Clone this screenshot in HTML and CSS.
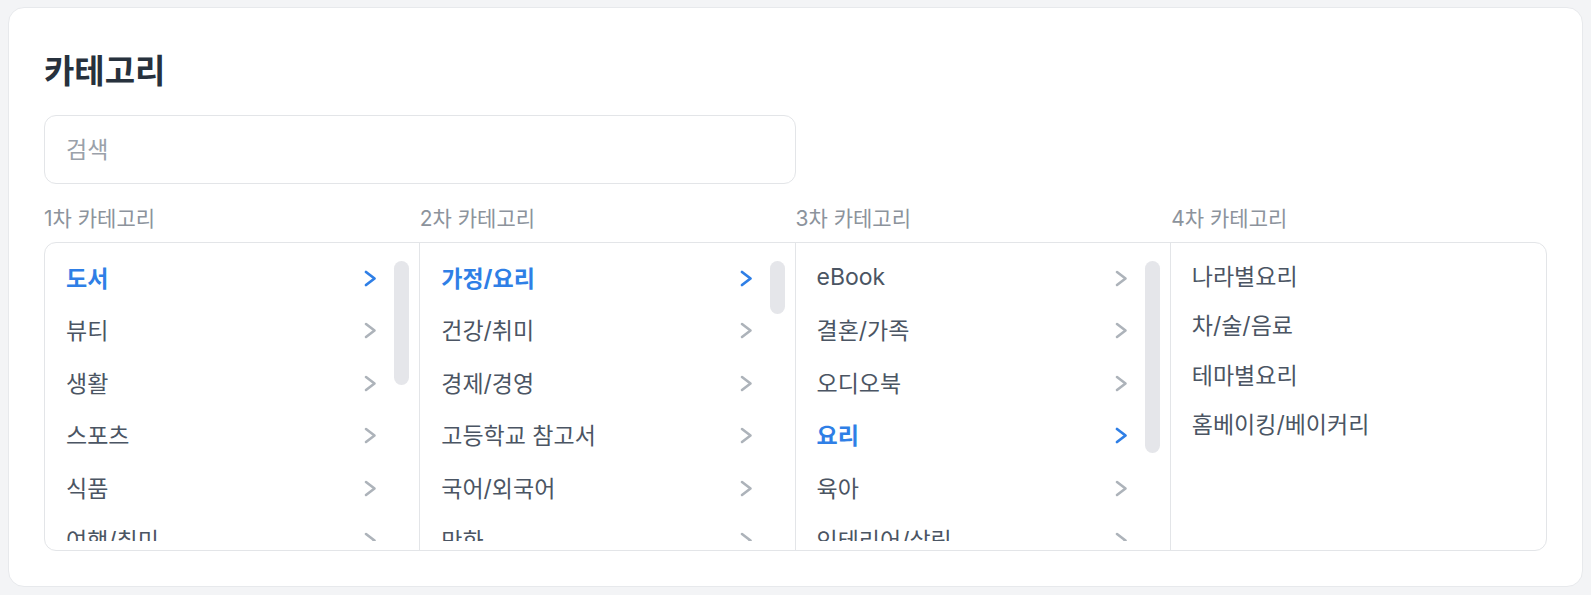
FILE: index.html
```html
<!DOCTYPE html>
<html lang="ko">
<head>
<meta charset="utf-8">
<title>카테고리</title>
<link rel="stylesheet" href="styles.css">
</head>
<body>
<section class="card">
  <h1 class="title">카테고리</h1>
  <input class="search" type="text" placeholder="검색">
  <div class="labels">
    <div class="label">1차 카테고리</div>
    <div class="label">2차 카테고리</div>
    <div class="label">3차 카테고리</div>
    <div class="label">4차 카테고리</div>
  </div>
  <div class="columns">
    <div class="col">
      <ul class="list">
        <li class="item active"><span>도서</span><svg class="chev" viewBox="0 0 13 17"><polyline points="2,2 10.5,8.5 2,15"/></svg></li>
        <li class="item"><span>뷰티</span><svg class="chev" viewBox="0 0 13 17"><polyline points="2,2 10.5,8.5 2,15"/></svg></li>
        <li class="item"><span>생활</span><svg class="chev" viewBox="0 0 13 17"><polyline points="2,2 10.5,8.5 2,15"/></svg></li>
        <li class="item"><span>스포츠</span><svg class="chev" viewBox="0 0 13 17"><polyline points="2,2 10.5,8.5 2,15"/></svg></li>
        <li class="item"><span>식품</span><svg class="chev" viewBox="0 0 13 17"><polyline points="2,2 10.5,8.5 2,15"/></svg></li>
        <li class="item"><span>여행/취미</span><svg class="chev" viewBox="0 0 13 17"><polyline points="2,2 10.5,8.5 2,15"/></svg></li>
        <li class="item"><span>의류</span><svg class="chev" viewBox="0 0 13 17"><polyline points="2,2 10.5,8.5 2,15"/></svg></li>
      </ul>
      <div class="thumb t1"></div>
    </div>
    <div class="col">
      <ul class="list">
        <li class="item active"><span>가정/요리</span><svg class="chev" viewBox="0 0 13 17"><polyline points="2,2 10.5,8.5 2,15"/></svg></li>
        <li class="item"><span>건강/취미</span><svg class="chev" viewBox="0 0 13 17"><polyline points="2,2 10.5,8.5 2,15"/></svg></li>
        <li class="item"><span>경제/경영</span><svg class="chev" viewBox="0 0 13 17"><polyline points="2,2 10.5,8.5 2,15"/></svg></li>
        <li class="item"><span>고등학교 참고서</span><svg class="chev" viewBox="0 0 13 17"><polyline points="2,2 10.5,8.5 2,15"/></svg></li>
        <li class="item"><span>국어/외국어</span><svg class="chev" viewBox="0 0 13 17"><polyline points="2,2 10.5,8.5 2,15"/></svg></li>
        <li class="item"><span>만화</span><svg class="chev" viewBox="0 0 13 17"><polyline points="2,2 10.5,8.5 2,15"/></svg></li>
        <li class="item"><span>소설/시/희곡</span><svg class="chev" viewBox="0 0 13 17"><polyline points="2,2 10.5,8.5 2,15"/></svg></li>
      </ul>
      <div class="thumb t2"></div>
    </div>
    <div class="col">
      <ul class="list">
        <li class="item"><span>eBook</span><svg class="chev" viewBox="0 0 13 17"><polyline points="2,2 10.5,8.5 2,15"/></svg></li>
        <li class="item"><span>결혼/가족</span><svg class="chev" viewBox="0 0 13 17"><polyline points="2,2 10.5,8.5 2,15"/></svg></li>
        <li class="item"><span>오디오북</span><svg class="chev" viewBox="0 0 13 17"><polyline points="2,2 10.5,8.5 2,15"/></svg></li>
        <li class="item active"><span>요리</span><svg class="chev" viewBox="0 0 13 17"><polyline points="2,2 10.5,8.5 2,15"/></svg></li>
        <li class="item"><span>육아</span><svg class="chev" viewBox="0 0 13 17"><polyline points="2,2 10.5,8.5 2,15"/></svg></li>
        <li class="item"><span>인테리어/살림</span><svg class="chev" viewBox="0 0 13 17"><polyline points="2,2 10.5,8.5 2,15"/></svg></li>
      </ul>
      <div class="thumb t3"></div>
    </div>
    <div class="col">
      <ul class="list leaf">
        <li class="item"><span>나라별요리</span></li>
        <li class="item"><span>차/술/음료</span></li>
        <li class="item"><span>테마별요리</span></li>
        <li class="item"><span>홈베이킹/베이커리</span></li>
      </ul>
    </div>
  </div>
</section>
</body>
</html>
```

FILE: styles.css
```css
* { box-sizing: border-box; }

html, body {
  margin: 0;
  background: #f3f4f6;
}

body {
  padding: 7px 8px 8px 8px;
  font-family: Inter, "Noto Sans CJK KR", sans-serif;
  color: #4b5563;
}

.card {
  background: #ffffff;
  border: 1px solid #e7e9ec;
  border-radius: 16px;
  padding: 41px 35px 35px 35px;
}

.title {
  margin: 0;
  font-size: 33px;
  line-height: 44px;
  font-weight: 700;
  color: #27313d;
}

.search {
  display: block;
  width: 50%;
  height: 69px;
  margin-top: 22px;
  border: 1px solid #e3e5e8;
  border-radius: 12px;
  padding: 0 21px;
  font-family: inherit;
  font-size: 23px;
  color: #374151;
  outline: none;
  background: #fff;
}

.search::placeholder {
  color: #9aa1aa;
}

.labels {
  display: grid;
  grid-template-columns: repeat(4, 1fr);
  margin-top: 22px;
}

.label {
  font-size: 21px;
  line-height: 26px;
  color: #8c939c;
}

.columns {
  display: grid;
  grid-template-columns: repeat(4, 1fr);
  margin-top: 10px;
  height: 309px;
  border: 1px solid #e3e5e8;
  border-radius: 12px;
  overflow: hidden;
}

.col {
  position: relative;
  display: flex;
  flex-direction: column;
  min-height: 0;
  padding: 7.5px 0 9px 0;
  border-right: 1px solid #e3e5e8;
}

.col:last-child {
  border-right: none;
}

.list {
  flex: 1;
  min-height: 0;
  overflow: hidden;
  list-style: none;
  margin: 0;
  padding: 0;
}

.item {
  display: flex;
  align-items: center;
  justify-content: space-between;
  height: 52.5px;
  padding: 0 42px 0 21px;
  font-size: 23px;
  color: #4b5563;
  white-space: nowrap;
}

.leaf .item {
  height: 49.3px;
}

.item.active {
  color: #2f7fe6;
  font-weight: 700;
}

.chev {
  width: 13px;
  height: 17px;
  margin-top: 3px;
  flex: none;
  fill: none;
  stroke: #adb3ba;
  stroke-width: 2.6;
  stroke-linecap: round;
  stroke-linejoin: round;
}

.item.active .chev {
  stroke: #2f7fe6;
  stroke-width: 2.8;
}

.thumb {
  position: absolute;
  top: 18px;
  right: 10px;
  width: 15px;
  border-radius: 8px;
  background: #e5e6ea;
}

.t1 { height: 124px; }
.t2 { height: 53px; }
.t3 { height: 192px; }
```
